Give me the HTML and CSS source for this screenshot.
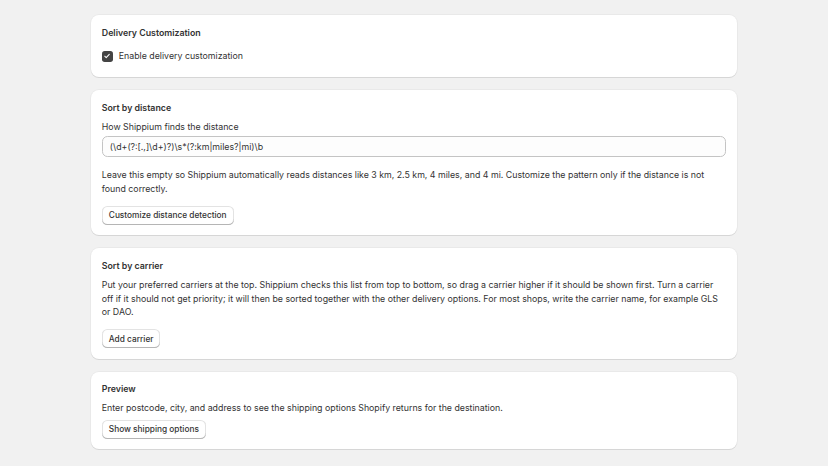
FILE: index.html
```html
<!DOCTYPE html>
<html lang="en">
<head>
    <meta charset="UTF-8">
    <meta name="viewport" content="width=device-width, initial-scale=1.0">
    <title>Delivery Customization</title>
    <link rel="stylesheet" href="styles.css">
</head>
<body>
    <main class="page">
        <section class="card">
            <h2 class="card-title">Delivery Customization</h2>
            <label class="checkbox">
                <span class="checkbox-box">
                    <svg viewBox="0 0 12 12" width="8" height="8"><path d="M2.6 6.3l2.2 2.2 4.6-5" fill="none" stroke="#fff" stroke-width="1.6" stroke-linecap="round" stroke-linejoin="round"/></svg>
                </span>
                <span>Enable delivery customization</span>
            </label>
        </section>

        <section class="card">
            <h2 class="card-title">Sort by distance</h2>
            <div class="field">
                <label for="pattern">How Shippium finds the distance</label>
                <input type="text" id="pattern" class="text-input" value="(\d+(?:[.,]\d+)?)\s*(?:km|miles?|mi)\b">
            </div>
            <p class="help gap-lg">Leave this empty so Shippium automatically reads distances like 3 km, 2.5 km, 4 miles, and 4 mi. Customize the pattern only if the distance is not found correctly.</p>
            <div class="gap-lg"><button class="btn">Customize distance detection</button></div>
        </section>

        <section class="card">
            <h2 class="card-title">Sort by carrier</h2>
            <p class="help">Put your preferred carriers at the top. Shippium checks this list from top to bottom, so drag a carrier higher if it should be shown first. Turn a carrier off if it should not get priority; it will then be sorted together with the other delivery options. For most shops, write the carrier name, for example GLS or DAO.</p>
            <div class="gap-lg"><button class="btn">Add carrier</button></div>
        </section>

        <section class="card">
            <h2 class="card-title">Preview</h2>
            <p class="help">Enter postcode, city, and address to see the shipping options Shopify returns for the destination.</p>
            <div><button class="btn">Show shipping options</button></div>
        </section>
    </main>
</body>
</html>
```

FILE: styles.css
```css
* { box-sizing: border-box; }
body {
    margin: 0;
    background-color: #f1f1f1;
    font-family: Inter, "Noto Sans", sans-serif;
    font-size: 8.8px;
    line-height: 13.5px;
    color: #333333;
}
.page {
    width: 646px;
    margin: 0 auto;
    padding: 15px 0;
    display: flex;
    flex-direction: column;
    gap: 13px;
}
.card {
    background-color: #ffffff;
    border-radius: 8px;
    padding: 10.8px;
    box-shadow: 0 1px 0 0 rgba(26, 26, 26, 0.09), 0 0 0 1px rgba(0, 0, 0, 0.03);
    display: flex;
    flex-direction: column;
    gap: 5.4px;
}
.card-title { margin: 0; font-size: 8.8px; font-weight: 600; line-height: 13.5px; }
.help { margin: 0; }
.gap-lg { margin-top: 5.4px; }

.checkbox { display: flex; align-items: center; gap: 6px; height: 21px; margin-top: 1px; margin-bottom: -0.5px; }
.checkbox-box {
    width: 11px;
    height: 11px;
    border-radius: 2.7px;
    background-color: #444444;
    display: flex;
    align-items: center;
    justify-content: center;
}

.field label { display: block; margin-bottom: 2.7px; }
.text-input {
    width: 100%;
    height: 21.6px;
    padding: 0 7px;
    border: 1px solid #c4c4c4;
    border-radius: 5.4px;
    font-family: inherit;
    font-size: 8.8px;
    color: #333333;
    background-color: #fdfdfd;
}

.btn {
    height: 18.5px;
    padding: 0 7px;
    border: none;
    border-radius: 5.4px;
    background-color: #ffffff;
    font-family: inherit;
    font-size: 8.3px;
    font-weight: 500;
    color: #333333;
    box-shadow: inset 0 -1px 0 0 #b5b5b5, inset 0 0 0 1px #e3e3e3;
    cursor: pointer;
}
```
